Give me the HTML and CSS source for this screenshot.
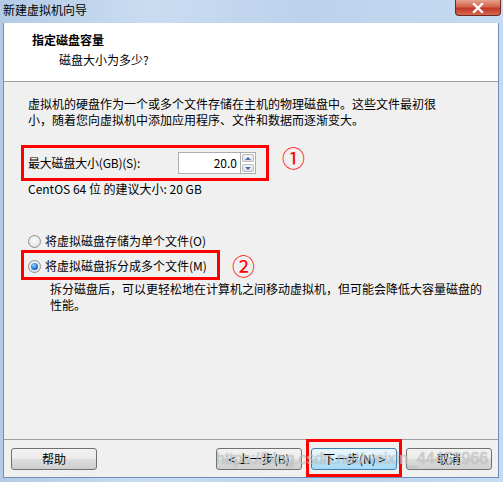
FILE: index.html
```html
<!DOCTYPE html>
<html lang="zh-CN">
<head>
    <meta charset="UTF-8">
    <title>新建虚拟机向导</title>
    <link rel="stylesheet" href="styles.css">
</head>
<body>
    <div class="window">
        <div class="titlebar">
            <span class="title">新建虚拟机向导</span>
            <span class="close">
                <svg width="14" height="10" viewBox="0 0 14 10">
                    <path d="M3 1 L11 9 M11 1 L3 9" stroke="#fff" stroke-width="2.4" stroke-linecap="square"/>
                </svg>
            </span>
        </div>
        <div class="client">
            <div class="header">
                <div class="header-title">指定磁盘容量</div>
                <div class="header-sub">磁盘大小为多少?</div>
            </div>
            <div class="content">
                <p class="intro">虚拟机的硬盘作为一个或多个文件存储在主机的物理磁盘中。这些文件最初很<br>小，随着您向虚拟机中添加应用程序、文件和数据而逐渐变大。</p>
                <div class="mark-row">
                    <div class="mark size-box">
                        <span class="size-label">最大磁盘大小(GB)(S):</span>
                        <span class="spin">
                            <span class="spin-value">20.0</span>
                            <span class="spin-btns">
                                <span class="spin-btn"><i class="arrow up"></i></span>
                                <span class="spin-btn"><i class="arrow down"></i></span>
                            </span>
                        </span>
                    </div>
                    <span class="num num-1">①</span>
                </div>
                <div class="hint">CentOS 64 位 的建议大小: 20 GB</div>
                <div class="radio-row first">
                    <span class="radio"></span>
                    <span>将虚拟磁盘存储为单个文件(O)</span>
                </div>
                <div class="mark-row">
                    <div class="mark radio-box">
                        <span class="radio checked"></span>
                        <span>将虚拟磁盘拆分成多个文件(M)</span>
                    </div>
                    <span class="num num-2">②</span>
                </div>
                <p class="desc">拆分磁盘后，可以更轻松地在计算机之间移动虚拟机，但可能会降低大容量磁盘的<br>性能。</p>
            </div>
            <div class="footer">
                <button class="btn">帮助</button>
                <div class="btn-group">
                    <button class="btn">&lt; 上一步(B)</button>
                    <span class="next-mark"><button class="btn focused">下一步(N) &gt;</button></span>
                    <button class="btn">取消</button>
                </div>
                <span class="watermark">https://blog.csdn.net/weixin_44451966</span>
            </div>
        </div>
    </div>
</body>
</html>
```

FILE: styles.css
```css
* {
    box-sizing: border-box;
}
html, body {
    margin: 0;
    padding: 0;
}
body {
    width: 503px;
    height: 482px;
    overflow: hidden;
    font-family: "Noto Sans CJK SC", sans-serif;
    font-size: 12px;
    line-height: 16px;
    color: #000;
}
.window {
    height: 482px;
    display: flex;
    flex-direction: column;
    background: linear-gradient(90deg, #b4cbe6 0%, #c9dcf1 30%, #bcd2ec 60%, #c6dbf2 100%);
    padding: 0 4px 4px 3px;
}
.titlebar {
    height: 23px;
    display: flex;
    align-items: flex-start;
    justify-content: space-between;
    flex-shrink: 0;
}
.title {
    line-height: 20px;
    color: #000;
}
.close {
    width: 46px;
    height: 16px;
    margin-right: -2px;
    border: 1px solid #6b2a22;
    border-top: none;
    border-radius: 0 0 4px 4px;
    background: linear-gradient(#e8a291 0%, #d2624a 45%, #c0392b 55%, #d8674d 100%);
    display: flex;
    align-items: center;
    justify-content: center;
}
.client {
    flex: 1;
    display: flex;
    flex-direction: column;
    background: #f0f0f0;
    border: 1px solid #6d8fb7;
    border-top: none;
    position: relative;
}
.header {
    height: 59px;
    background: #fff;
    border-bottom: 1px solid #a0a0a0;
    padding: 9px 0 0 28px;
    flex-shrink: 0;
}
.header-title {
    font-weight: bold;
}
.header-sub {
    margin-top: 4px;
    padding-left: 27px;
}
.content {
    flex: 1;
    padding: 0 0 0 24px;
}
.intro {
    margin: 14px 0 0;
}
.mark-row {
    display: flex;
    align-items: center;
}
.mark {
    border: 3px solid #f00;
    margin-left: -7px;
}
.size-box {
    margin-top: 17px;
    width: 248px;
    height: 36px;
    display: flex;
    align-items: center;
    justify-content: space-between;
    padding: 0 10px 0 4px;
}
.size-label {
    letter-spacing: -0.2px;
}
.spin {
    display: flex;
    height: 22px;
}
.spin-value {
    width: 62px;
    height: 22px;
    border: 1px solid #abadb3;
    border-right: none;
    background: #fff;
    text-align: right;
    padding-right: 3px;
    line-height: 20px;
}
.spin-btns {
    width: 16px;
    display: flex;
    flex-direction: column;
    border: 1px solid #abadb3;
    background: #fff;
}
.spin-btn {
    flex: 1;
    margin: 1px;
    border: 1px solid #b9b9b9;
    border-radius: 2px;
    background: linear-gradient(#f6f6f6, #dedede);
    display: flex;
    align-items: center;
    justify-content: center;
}
.arrow {
    width: 0;
    height: 0;
    border-left: 3px solid transparent;
    border-right: 3px solid transparent;
}
.arrow.up {
    border-bottom: 3px solid #4a6fb5;
}
.arrow.down {
    border-top: 3px solid #4a6fb5;
}
.num {
    color: #f00;
    font-family: "Noto Sans CJK SC", sans-serif;
    font-size: 23px;
    line-height: 24px;
}
.num-1 {
    margin: 4px 0 0 13px;
}
.num-2 {
    margin: 0 0 0 12px;
}
.radio-row {
    display: flex;
    align-items: center;
    gap: 4px;
}
.radio-row.first {
    margin-top: 36px;
}
.radio-box {
    margin-top: 1px;
    width: 199px;
    height: 30px;
    display: flex;
    align-items: center;
    gap: 4px;
    padding: 2px 0 0 4px;
}
.radio {
    width: 13px;
    height: 13px;
    border-radius: 50%;
    border: 1px solid #8e8f8f;
    background: radial-gradient(circle at 50% 40%, #fdfdfd 0%, #e8e8e8 60%, #cfcfcf 100%);
    position: relative;
    flex-shrink: 0;
}
.radio.checked::after {
    content: "";
    position: absolute;
    left: 2px;
    top: 2px;
    width: 7px;
    height: 7px;
    border-radius: 50%;
    background: radial-gradient(circle at 40% 35%, #9fd8ff 0%, #2a7fd2 50%, #0d3f86 100%);
}
.desc {
    margin: 1px 0 0 22px;
}
.footer {
    height: 38px;
    flex-shrink: 0;
    border-top: 1px solid #a0a0a0;
    display: flex;
    align-items: flex-start;
    justify-content: space-between;
    padding: 8px 6px 0 7px;
    position: relative;
}
.btn {
    width: 86px;
    height: 22px;
    font: inherit;
    color: #000;
    border: 1px solid #707070;
    border-radius: 3px;
    background: linear-gradient(#f2f2f2 0%, #ebebeb 50%, #dddddd 51%, #cfcfcf 100%);
    padding: 0;
    line-height: 20px;
}
.btn-group {
    display: flex;
    gap: 9px;
}
.next-mark {
    border: 3px solid #f00;
    margin: -9px -5px 0;
    padding: 6px 2px 7px;
    height: 38px;
}
.btn.focused {
    border-color: #3c7fb1;
    background: linear-gradient(#eaf6fd 0%, #d9f0fc 50%, #bee6fd 51%, #a7d9f5 100%);
}
.watermark {
    position: absolute;
    left: 212px;
    top: 10px;
    font-family: "Liberation Sans", sans-serif;
    font-size: 16px;
    line-height: 18px;
    color: rgba(255, 255, 255, 0.55);
    text-shadow: 0 0 1px rgba(90, 90, 90, 0.7);
    pointer-events: none;
    white-space: nowrap;
}
```
